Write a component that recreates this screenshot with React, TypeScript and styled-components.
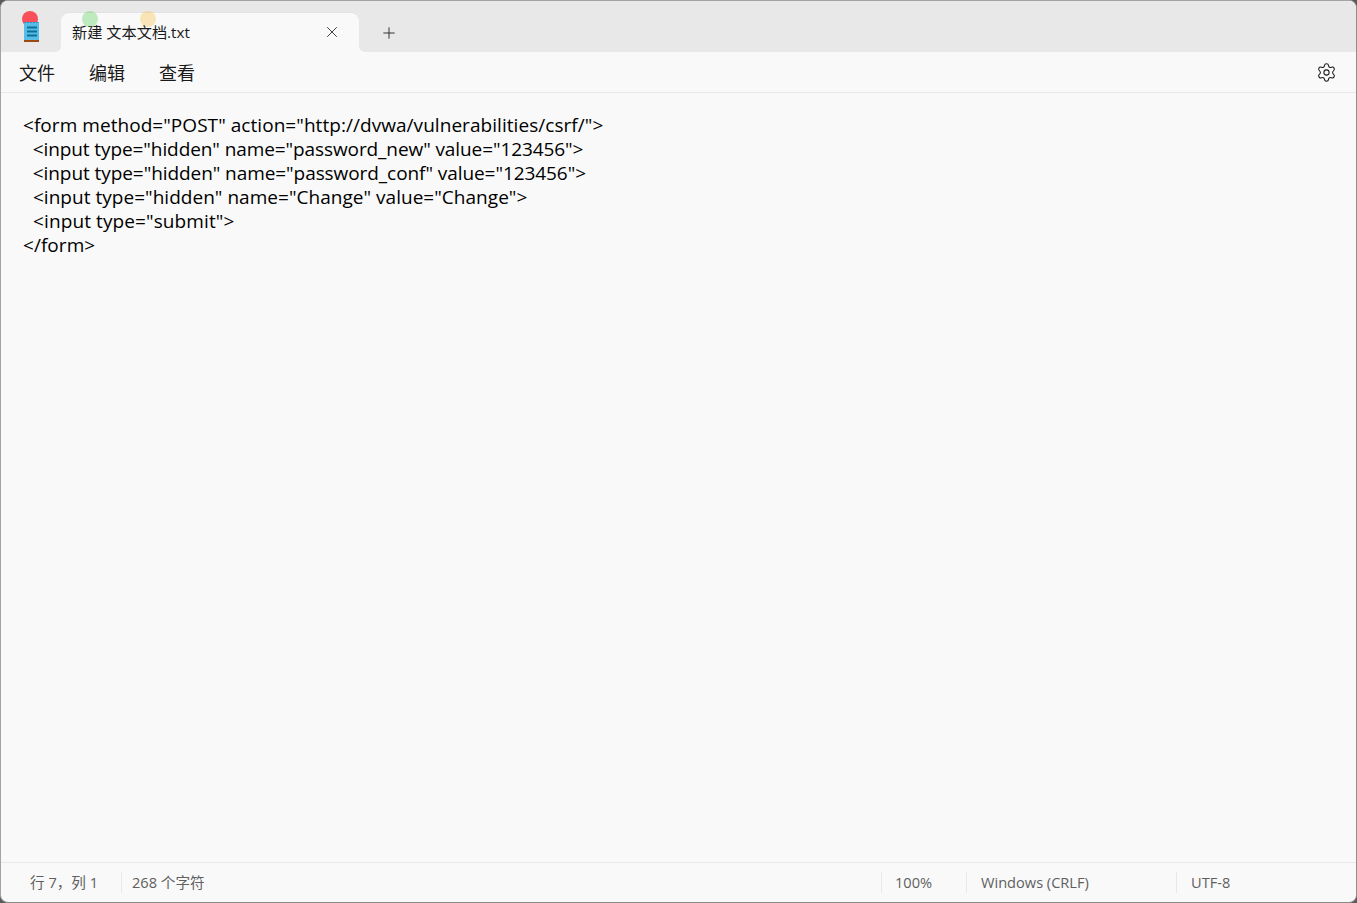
import { createGlobalStyle } from "styled-components";
import styled from "styled-components";
import { Settings, X, Plus } from "lucide-react";

const Global = createGlobalStyle`
  html, body { margin: 0; padding: 0; height: 100%; background: #5a5a5a; overflow: hidden; }
  #root { height: 100%; }
`

const uiFont = `"Open Sans", "Noto Sans CJK SC", sans-serif`

const Win = styled.div`
  position: relative;
  height: 903px;
  box-sizing: border-box;
  border: 1px solid #a3a3a3;
  border-right-color: #8f8f8f;
  border-bottom-color: #8a8a8a;
  border-radius: 8px;
  background: #f9f9f9;
  overflow: hidden;
  display: flex;
  flex-direction: column;
  font-family: ${uiFont};
  color: #1a1a1a;
`

const Strip = styled.div`
  display: flex;
  height: 51px;
  flex-shrink: 0;
  background: #f9f9f9;
`

const Lead = styled.div`
  width: 60px;
  background: #e8e8e8;
  border-bottom-right-radius: 6px;
  display: flex;
  justify-content: center;
  padding-top: 16px;
  box-sizing: border-box;
`

const IconWrap = styled.div`
  position: relative;
  z-index: 1;
  height: 26px;
`

const TabSlot = styled.div`
  width: 298px;
  background: #e8e8e8;
  padding-top: 12px;
  box-sizing: border-box;
`

const Tab = styled.div`
  height: 39px;
  background: #f9f9f9;
  border-radius: 8px 8px 0 0;
  box-shadow: 0 -1px 0 #e2e2e2;
  display: flex;
  align-items: center;
  justify-content: space-between;
  padding: 0 18px 2px 11px;
  box-sizing: border-box;
  font-size: 15.2px;
`

const TabTitle = styled.span`
  margin-bottom: 2px;
`

const Rest = styled.div`
  flex: 1;
  background: #e8e8e8;
  border-bottom-left-radius: 6px;
  padding: 12px 0 0 21px;
  box-sizing: border-box;
`

const NewTab = styled.div`
  height: 39px;
  width: 18px;
  display: flex;
  align-items: center;
  color: #222;
`

const Menu = styled.div`
  height: 41px;
  flex-shrink: 0;
  box-sizing: border-box;
  border-bottom: 1px solid #e8e8e8;
  display: flex;
  align-items: center;
  padding: 0 19px 0 18px;
  gap: 34px;
  font-size: 18px;
`

const MenuItem = styled.span`
  line-height: 40px;
  padding-top: 2px;
`

const Gear = styled.div`
  margin-left: auto;
  display: flex;
  color: #1c1c1c;
`

const Editor = styled.div`
  flex: 1;
  padding: 20px 22px 0;
  font-family: "Open Sans", sans-serif;
  font-size: 19px;
  line-height: 24px;
  color: #000;
`

const Line = styled.div<{ $track: number }>`
  white-space: pre;
  height: 24px;
  letter-spacing: ${(p) => p.$track}px;
`

const Status = styled.div`
  height: 40px;
  flex-shrink: 0;
  box-sizing: border-box;
  border-top: 1px solid #e8e8e8;
  display: flex;
  align-items: center;
  font-size: 14.6px;
  color: #5f5f5f;
`

const Cell = styled.div<{ $w?: number; $pad?: number }>`
  height: 21px;
  line-height: 21px;
  box-sizing: border-box;
  padding-left: ${(p) => p.$pad ?? 14}px;
  border-left: 1px solid #e8e8e8;
  width: ${(p) => (p.$w ? `${p.$w}px` : "auto")};
  white-space: nowrap;
  &:first-child {
    border-left: none;
    padding-left: 29px;
  }
`

const Spacer = styled.div`
  flex: 1;
`

const Dot = styled.span<{ $x: number; $c: string }>`
  position: absolute;
  top: 10px;
  left: ${(p) => p.$x}px;
  width: 16px;
  height: 16px;
  border-radius: 50%;
  background: ${(p) => p.$c};
`

const source = [
  { text: `<form method="POST" action="http://dvwa/vulnerabilities/csrf/">`, track: 0.05 },
  { text: `  <input type="hidden" name="password_new" value="123456">`, track: -0.09 },
  { text: `  <input type="hidden" name="password_conf" value="123456">`, track: -0.07 },
  { text: `  <input type="hidden" name="Change" value="Change">`, track: 0.03 },
  { text: `  <input type="submit">`, track: 0.1 },
  { text: `</form>`, track: 0.05 },
]

function NotepadIcon() {
  return (
    <svg width="15" height="26" viewBox="0 0 15 26" style={{ display: "block" }}>
      <rect x="0" y="5" width="15" height="18" fill="#56bde6" />
      <path d="M1 5v1M4 5v1M7 5v1M10 5v1M13 5v1" stroke="#1c6f9c" strokeWidth="1.2" />
      <rect x="3" y="9.5" width="10" height="2" fill="#0f6f96" />
      <rect x="3" y="13.5" width="10" height="2" fill="#0f6f96" />
      <rect x="3" y="17.5" width="10" height="2" fill="#0f6f96" />
      <rect x="0" y="23" width="15" height="2" fill="#9c4a12" />
    </svg>
  )
}

export default function App() {
  return (
    <>
      <Global />
      <Win>
        <Strip>
          <Lead>
            <IconWrap>
              <NotepadIcon />
            </IconWrap>
          </Lead>
          <TabSlot>
            <Tab>
              <TabTitle>新建 文本文档.txt</TabTitle>
              <X size={18} strokeWidth={1.1} />
            </Tab>
          </TabSlot>
          <Rest>
            <NewTab>
              <Plus size={18} strokeWidth={1.2} />
            </NewTab>
          </Rest>
        </Strip>
        <Menu>
          <MenuItem>文件</MenuItem>
          <MenuItem>编辑</MenuItem>
          <MenuItem>查看</MenuItem>
          <Gear>
            <Settings size={21} strokeWidth={1.2} />
          </Gear>
        </Menu>
        <Editor>
          {source.map((l) => (
            <Line key={l.text} $track={l.track}>{l.text}</Line>
          ))}
        </Editor>
        <Status>
          <Cell $w={120}>行 7，列 1</Cell>
          <Cell $pad={10}>268 个字符</Cell>
          <Spacer />
          <Cell $w={85} $pad={13}>100%</Cell>
          <Cell $w={210}>Windows (CRLF)</Cell>
          <Cell $w={180}>UTF-8</Cell>
        </Status>
        <Dot $x={21} $c="#f8505a" />
        <Dot $x={81} $c="rgba(80, 210, 80, 0.35)" />
        <Dot $x={139} $c="rgba(250, 190, 60, 0.35)" />
      </Win>
    </>
  )
}
